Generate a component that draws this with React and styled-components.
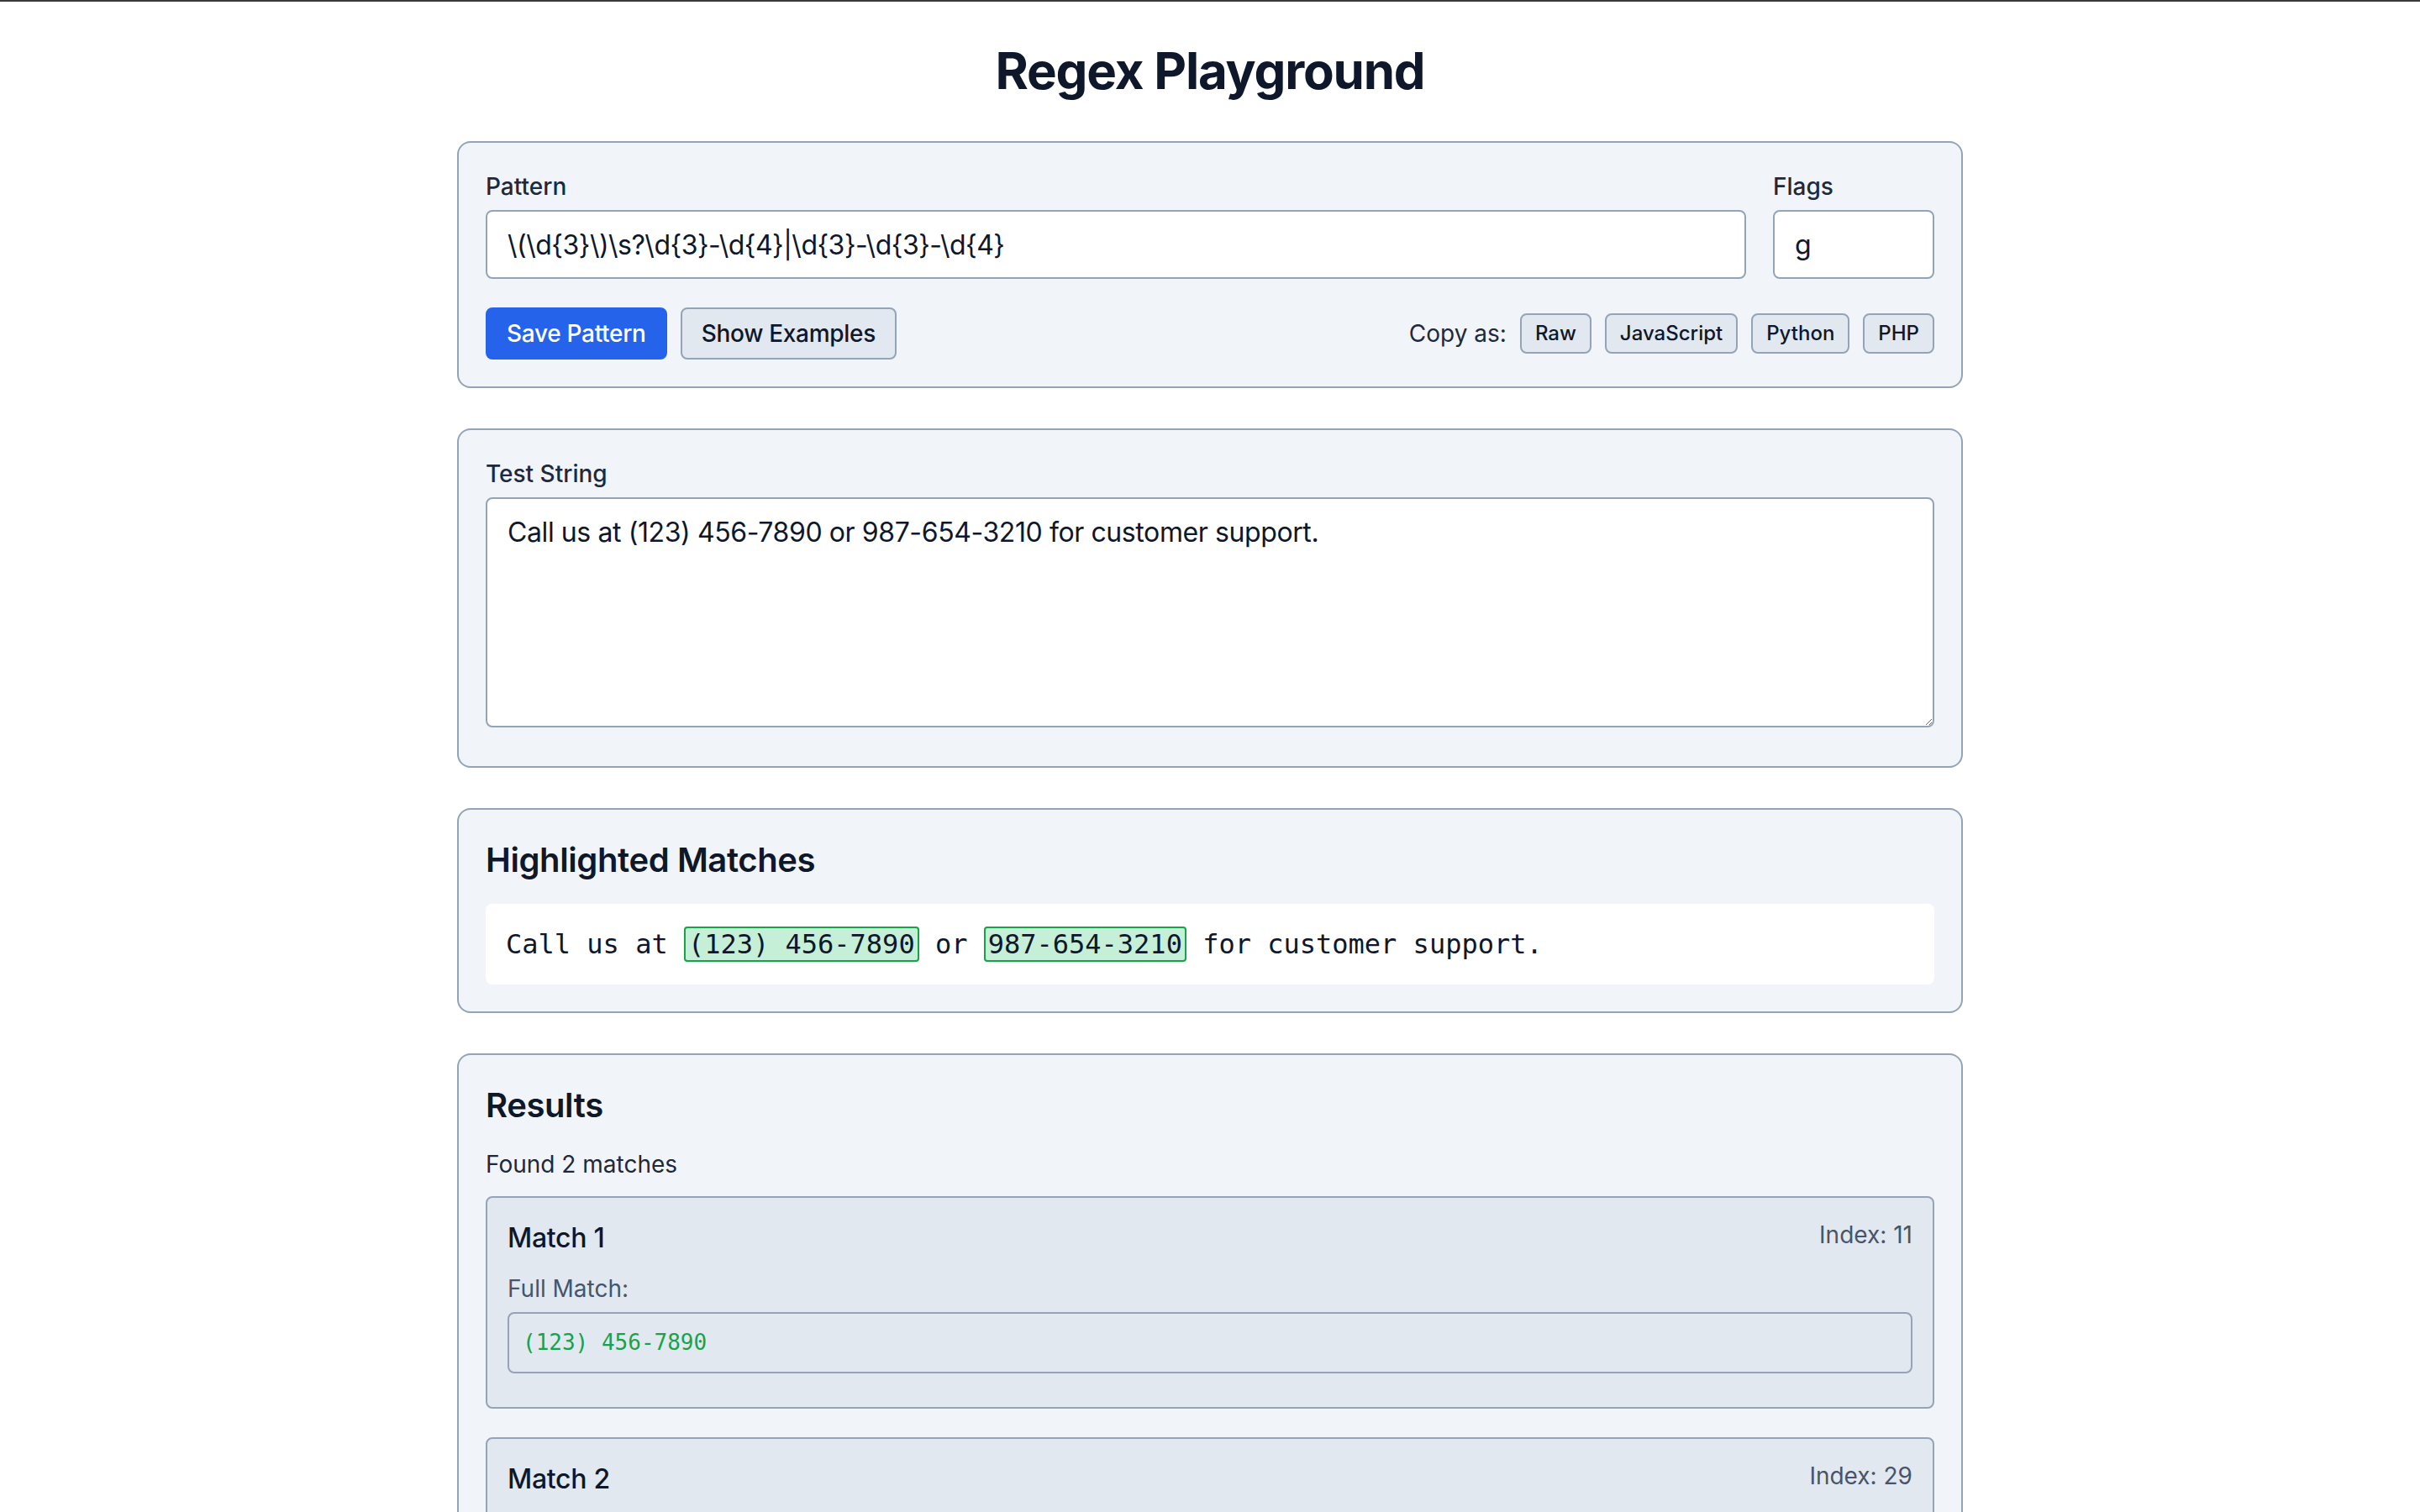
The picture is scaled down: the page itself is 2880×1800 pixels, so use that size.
import React, { useState } from 'react';
import styled, { createGlobalStyle } from 'styled-components';

const GlobalStyle = createGlobalStyle`
  * {
    box-sizing: border-box;
  }
  body {
    margin: 0;
    background: #ffffff;
    border-top: 2px solid #3a3a3a;
    font-family: Inter, "Noto Sans", sans-serif;
    color: #0f172a;
  }
`;

const Page = styled.div`
  padding: 46px 48px 48px;
`;

const Title = styled.h1`
  margin: 0 0 48px;
  text-align: center;
  font-size: 60px;
  line-height: 72px;
  font-weight: 700;
  letter-spacing: -1.2px;
  color: #0f172a;
`;

const Container = styled.main`
  max-width: 1792px;
  margin: 0 auto;
`;

const Card = styled.section`
  background: #f1f5f9;
  border: 2px solid #94a3b8;
  border-radius: 16px;
  padding: 32px;
  margin-bottom: 48px;
`;

const FieldRow = styled.div`
  display: flex;
  gap: 32px;
`;

const Field = styled.div`
  display: flex;
  flex-direction: column;
  flex: ${p => (p.$grow ? '1 1 auto' : '0 0 192px')};
`;

const Label = styled.label`
  display: block;
  font-size: 28px;
  line-height: 40px;
  font-weight: 500;
  color: #1e293b;
  margin-bottom: 8px;
`;

const TextInput = styled.input`
  width: 100%;
  height: 82px;
  padding: 16px 24px;
  font-family: Inter, "Noto Sans", sans-serif;
  font-size: 32px;
  line-height: 46px;
  letter-spacing: -0.5px;
  color: #0f172a;
  background: #ffffff;
  border: 2px solid #94a3b8;
  border-radius: 8px;
  outline: none;
`;

const TextArea = styled.textarea`
  display: block;
  width: 100%;
  height: 274px;
  margin-bottom: 14px;
  padding: 16px 24px;
  font-family: Inter, "Noto Sans", sans-serif;
  font-size: 32px;
  line-height: 48px;
  letter-spacing: -0.4px;
  color: #0f172a;
  background: #ffffff;
  border: 2px solid #94a3b8;
  border-radius: 8px;
  outline: none;
`;

const Toolbar = styled.div`
  display: flex;
  justify-content: space-between;
  align-items: center;
  margin-top: 34px;
`;

const ButtonGroup = styled.div`
  display: flex;
  align-items: center;
  gap: 16px;
`;

const Button = styled.button`
  font-family: Inter, "Noto Sans", sans-serif;
  font-size: 28px;
  line-height: 40px;
  font-weight: 500;
  letter-spacing: -0.3px;
  padding: 9px 23px;
  border-radius: 8px;
  border: 2px solid ${p => (p.$primary ? '#2563eb' : '#94a3b8')};
  background: ${p => (p.$primary ? '#2563eb' : '#e2e8f0')};
  color: ${p => (p.$primary ? '#ffffff' : '#0f172a')};
  cursor: pointer;
`;

const CopyLabel = styled.span`
  font-size: 28px;
  line-height: 40px;
  color: #1e293b;
`;

const CopyButton = styled.button`
  font-family: Inter, "Noto Sans", sans-serif;
  font-size: 24px;
  line-height: 36px;
  font-weight: 500;
  padding: 4px 16px;
  border-radius: 8px;
  border: 2px solid #94a3b8;
  background: #e2e8f0;
  color: #0f172a;
  cursor: pointer;
`;

const SectionTitle = styled.h2`
  margin: 0 0 ${p => p.$gap}px;
  font-size: 40px;
  line-height: 56px;
  font-weight: 600;
  letter-spacing: -0.4px;
  color: #0f172a;
`;

const HighlightBox = styled.div`
  background: #ffffff;
  border-radius: 8px;
  padding: 24px;
  font-family: "DejaVu Sans Mono", "Liberation Mono", monospace;
  font-size: 32px;
  line-height: 48px;
  white-space: pre-wrap;
  color: #0f172a;
`;

const Hit = styled.mark`
  background: #c6efd7;
  color: inherit;
  border: 2px solid #16a34a;
  border-radius: 4px;
  padding: 0 3px;
`;

const Summary = styled.p`
  margin: 0 0 18px;
  font-size: 28px;
  line-height: 40px;
  color: #1e293b;
`;

const MatchList = styled.div`
  display: flex;
  flex-direction: column;
  gap: 34px;
`;

const MatchCard = styled.div`
  background: #e2e8f0;
  border: 2px solid #94a3b8;
  border-radius: 8px;
  padding: 24px;
`;

const MatchHeader = styled.div`
  display: flex;
  justify-content: space-between;
  align-items: flex-start;
  margin-bottom: 16px;
`;

const MatchTitle = styled.h3`
  margin: 0;
  font-size: 32px;
  line-height: 48px;
  font-weight: 500;
  letter-spacing: -0.3px;
  color: #0f172a;
`;

const MatchIndex = styled.span`
  font-size: 28px;
  line-height: 40px;
  color: #475569;
`;

const SubLabel = styled.div`
  font-size: 28px;
  line-height: 40px;
  color: #475569;
  margin-bottom: 8px;
`;

const CodeBlock = styled.div`
  background: #e2e8f0;
  border: 2px solid #94a3b8;
  border-radius: 8px;
  padding: 16px;
  margin-bottom: 16px;
  font-family: "DejaVu Sans Mono", "Liberation Mono", monospace;
  font-size: 26px;
  line-height: 37px;
  color: #16a34a;
  white-space: pre;
`;

const DEFAULT_PATTERN = String.raw`\(\d{3}\)\s?\d{3}-\d{4}|\d{3}-\d{3}-\d{4}`;
const DEFAULT_TEXT = 'Call us at (123) 456-7890 or 987-654-3210 for customer support.';

function findMatches(pattern, flags, text) {
  try {
    const re = new RegExp(pattern, flags.includes('g') ? flags : flags + 'g');
    return [...text.matchAll(re)].map(m => ({ value: m[0], index: m.index }));
  } catch (e) {
    return [];
  }
}

function highlight(text, matches) {
  const parts = [];
  let last = 0;
  matches.forEach((m, i) => {
    parts.push(text.slice(last, m.index));
    parts.push(<Hit key={i}>{m.value}</Hit>);
    last = m.index + m.value.length;
  });
  parts.push(text.slice(last));
  return parts;
}

export default function App() {
  const [pattern, setPattern] = useState(DEFAULT_PATTERN);
  const [flags, setFlags] = useState('g');
  const [text, setText] = useState(DEFAULT_TEXT);

  const matches = findMatches(pattern, flags, text);

  return (
    <Page>
      <GlobalStyle />
      <Title>Regex Playground</Title>
      <Container>
        <Card>
          <FieldRow>
            <Field $grow>
              <Label>Pattern</Label>
              <TextInput value={pattern} onChange={e => setPattern(e.target.value)} />
            </Field>
            <Field>
              <Label>Flags</Label>
              <TextInput value={flags} onChange={e => setFlags(e.target.value)} />
            </Field>
          </FieldRow>
          <Toolbar>
            <ButtonGroup>
              <Button $primary>Save Pattern</Button>
              <Button>Show Examples</Button>
            </ButtonGroup>
            <ButtonGroup>
              <CopyLabel>Copy as:</CopyLabel>
              <CopyButton>Raw</CopyButton>
              <CopyButton>JavaScript</CopyButton>
              <CopyButton>Python</CopyButton>
              <CopyButton>PHP</CopyButton>
            </ButtonGroup>
          </Toolbar>
        </Card>

        <Card>
          <Label>Test String</Label>
          <TextArea value={text} onChange={e => setText(e.target.value)} />
        </Card>

        <Card>
          <SectionTitle $gap={24}>Highlighted Matches</SectionTitle>
          <HighlightBox>{highlight(text, matches)}</HighlightBox>
        </Card>

        <Card>
          <SectionTitle $gap={22}>Results</SectionTitle>
          <Summary>Found {matches.length} matches</Summary>
          <MatchList>
            {matches.map((m, i) => (
              <MatchCard key={i}>
                <MatchHeader>
                  <MatchTitle>Match {i + 1}</MatchTitle>
                  <MatchIndex>Index: {m.index}</MatchIndex>
                </MatchHeader>
                <SubLabel>Full Match:</SubLabel>
                <CodeBlock>{m.value}</CodeBlock>
              </MatchCard>
            ))}
          </MatchList>
        </Card>
      </Container>
    </Page>
  );
}
